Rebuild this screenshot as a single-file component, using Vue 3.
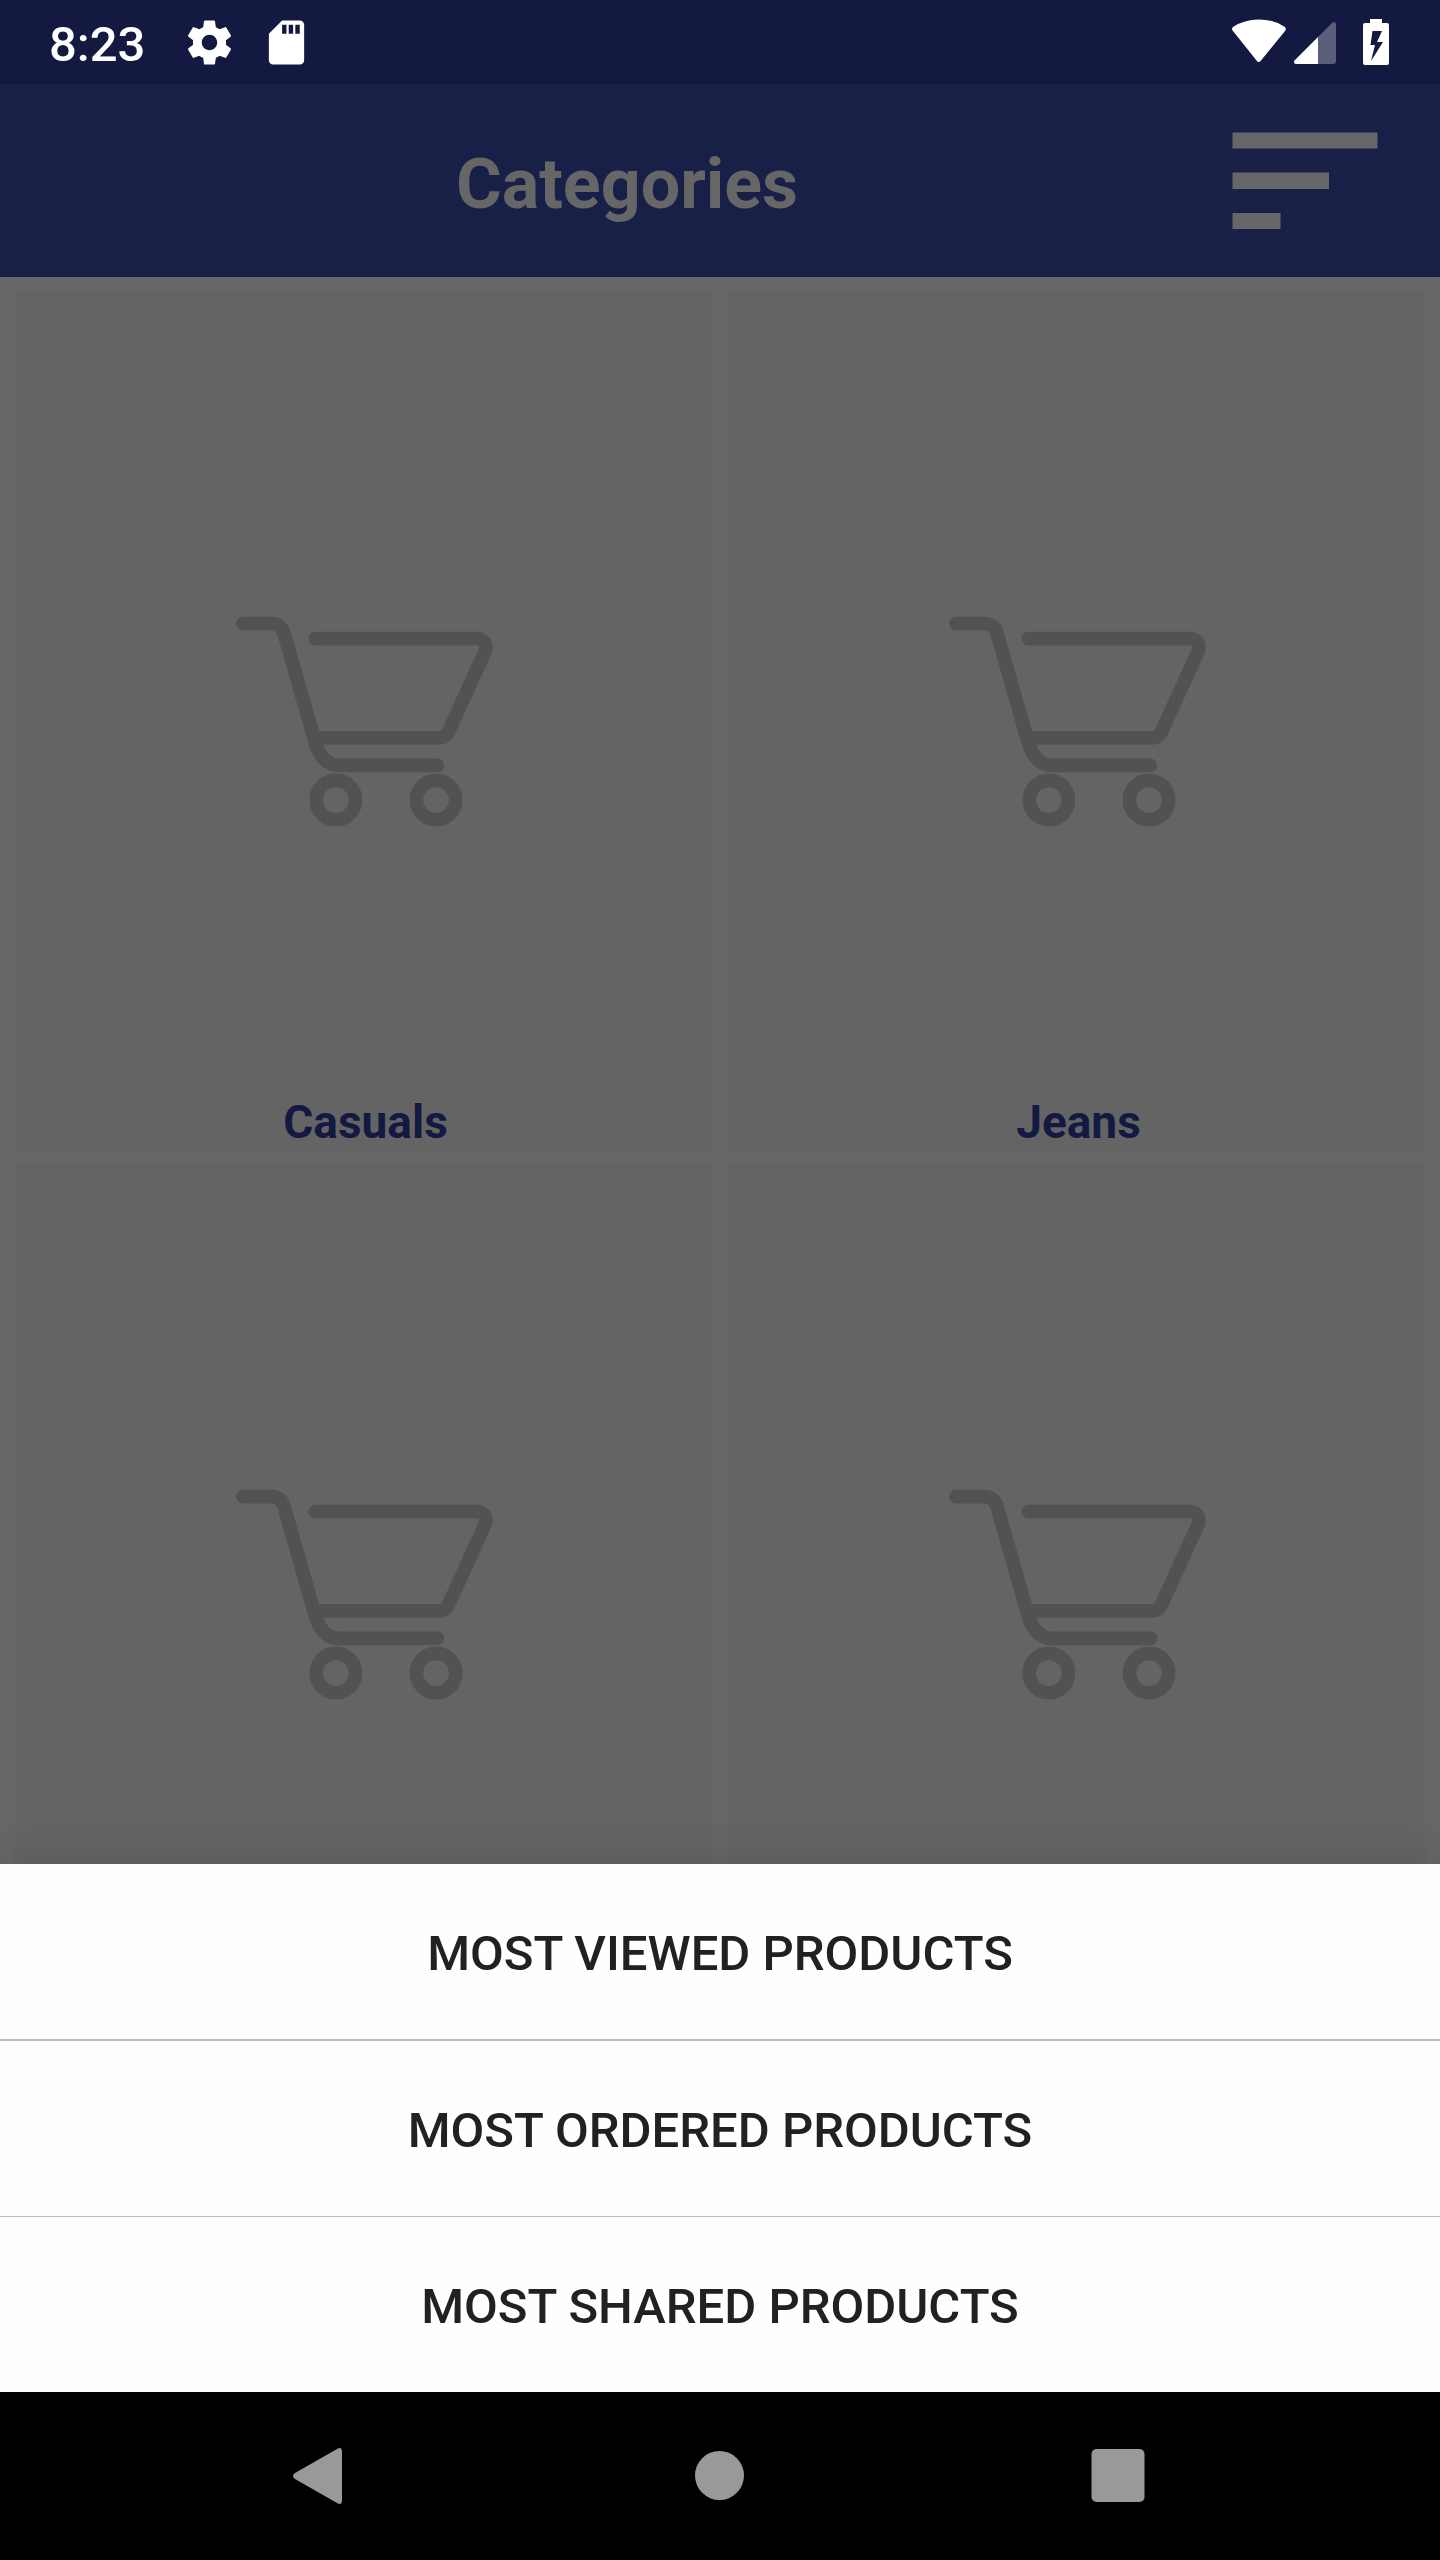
<script setup>
const categories = [
  { id: 1, name: 'Casuals' },
  { id: 2, name: 'Jeans' },
  { id: 3, name: '' },
  { id: 4, name: '' },
]

const actions = ['MOST VIEWED PRODUCTS', 'MOST ORDERED PRODUCTS', 'MOST SHARED PRODUCTS']
</script>

<template>
  <div class="screen">
    <div class="status">
      <time class="clock">8:23</time>
      <svg class="settings" width="53" height="53" viewBox="0 0 24 24" aria-hidden="true">
        <path d="M19.43 12.98c.04-.32.07-.64.07-.98s-.03-.66-.07-.98l2.11-1.65c.19-.15.24-.42.12-.64l-2-3.46c-.12-.22-.39-.3-.61-.22l-2.49 1c-.52-.4-1.08-.73-1.69-.98l-.38-2.65C14.46 2.18 14.25 2 14 2h-4c-.25 0-.46.18-.49.42l-.38 2.65c-.61.25-1.17.59-1.69.98l-2.49-1c-.23-.09-.49 0-.61.22l-2 3.46c-.13.22-.07.49.12.64l2.11 1.65c-.04.32-.07.65-.07.98s.03.66.07.98l-2.11 1.65c-.19.15-.24.42-.12.64l2 3.46c.12.22.39.3.61.22l2.49-1c.52.4 1.08.73 1.69.98l.38 2.65c.03.24.24.42.49.42h4c.25 0 .46-.18.49-.42l.38-2.65c.61-.25 1.17-.59 1.69-.98l2.49 1c.23.09.49 0 .61-.22l2-3.46c.12-.22.07-.49-.12-.64l-2.11-1.65zM12 15.5c-1.93 0-3.5-1.57-3.5-3.5s1.57-3.5 3.5-3.5 3.5 1.57 3.5 3.5-1.57 3.5-3.5 3.5z" />
      </svg>
      <svg class="card-icon" width="53" height="53" viewBox="0 0 24 24" aria-hidden="true">
        <path d="M18 2h-8L4.02 8 4 20c0 1.1.9 2 2 2h12c1.1 0 2-.9 2-2V4c0-1.1-.9-2-2-2zm-6 6h-2V4h2v4zm3 0h-2V4h2v4zm3 0h-2V4h2v4z" />
      </svg>
      <svg class="wifi" width="54" height="52" viewBox="0 0 54 52" aria-hidden="true">
        <path d="M1 15Q-1 13 1 11Q12 3.500 27 3.500T53 11Q54.500 13 53 15L29 44.500Q26.500 47.500 24.500 44.500Z" />
      </svg>
      <svg class="signal" width="42" height="52" viewBox="0 0 42 52" aria-hidden="true">
        <path opacity=".3" d="M24 21L38 7Q41 4.500 42 8V45Q42 48 39 48H24Z" />
        <path d="M24 21V48H2Q-1 47.500 .5 44.500Z" />
      </svg>
      <svg width="26" height="52" viewBox="0 0 26 52" aria-hidden="true">
        <path fill-rule="evenodd" d="M7 3H19V7H24Q26 7 26 9V47Q26 49 24 49H2Q0 49 0 47V9Q0 7 2 7H7ZM9.500 15L7.500 29H12L8 45L20 26H14L19 15Z" />
      </svg>
    </div>

    <header class="bar">
      <h1>Categories</h1>
      <button class="sort" type="button" aria-label="Sort">
        <svg width="146" height="98" viewBox="0 0 146 98" aria-hidden="true">
          <path d="M0.500 0.500H145.500V16.500H0.500ZM0.500 40.500H97V57H0.500ZM0.500 81H48.500V97H0.500Z" />
        </svg>
      </button>
    </header>

    <main class="grid">
      <article v-for="c in categories" :key="c.id" class="card">
        <svg class="cart" width="257" height="211" viewBox="108 108 772 632" aria-hidden="true">
          <path d="M129 130H215Q243 131 252 158L341 470Q361 555 417 556H713" />
          <path d="M346 175H836Q864 181 857 212L746 455Q738 473 720 473H350" />
          <circle cx="408" cy="660" r="59" />
          <circle cx="709" cy="660" r="59" />
        </svg>
        <h2 v-if="c.name">{{ c.name }}</h2>
      </article>
    </main>

    <section class="sheet" aria-label="Sort products">
      <button v-for="a in actions" :key="a" type="button">{{ a }}</button>
    </section>

    <nav class="nav">
      <button type="button" aria-label="Back">
        <svg width="64" height="64" viewBox="0 0 64 64"><path d="M49 5Q54 2 54 8V56Q54 62 49 59L7 35Q3 32 7 29Z" /></svg>
      </button>
      <button type="button" aria-label="Home">
        <svg width="64" height="64" viewBox="0 0 64 64"><circle cx="31.500" cy="31.500" r="24.500" /></svg>
      </button>
      <button type="button" aria-label="Recent apps">
        <svg width="64" height="64" viewBox="0 0 64 64"><rect x="3.500" y="5" width="53" height="53" rx="5" /></svg>
      </button>
    </nav>
  </div>
</template>

<style>
body {
  margin: 0;
}
</style>

<style scoped>
.screen {
  display: flex;
  flex-direction: column;
  height: 100vh;
  overflow: hidden;
  background: #666;
  font-family: Roboto, "Liberation Sans", sans-serif;
}

button {
  border: 0;
  padding: 0;
  background: none;
  font: inherit;
}

svg {
  display: block;
  flex: none;
}

.status {
  display: flex;
  align-items: center;
  flex: none;
  height: 84px;
  padding: 0 51px 0 49px;
  background: #131940;
  color: #fff;
  fill: #fff;
}

.clock {
  font-size: 49px;
  line-height: 56px;
  font-weight: 500;
  padding-top: 6px;
}

.settings {
  margin-left: 38px;
}

.card-icon {
  margin-left: 24px;
}

.wifi {
  margin-left: auto;
}

.signal {
  margin: 0 27px 0 8px;
}

.bar {
  display: flex;
  align-items: center;
  flex: none;
  height: 193px;
  padding: 0 62px 0 22px;
  background: #192048;
}

.bar h1 {
  flex: 1;
  margin: 0;
  padding-top: 6px;
  font-size: 70px;
  line-height: 82px;
  font-weight: 700;
  text-align: center;
  color: #666;
}

.sort {
  fill: #666;
}

.grid {
  flex: 1;
  min-height: 0;
  display: grid;
  grid-template-columns: 1fr 1fr;
  align-content: start;
  gap: 14px;
  padding: 14px;
  box-sizing: border-box;
  overflow: hidden;
}

.card {
  display: grid;
  aspect-ratio: 699 / 859;
  background: #646464;
}

.cart,
.card h2 {
  grid-area: 1 / 1;
}

.cart {
  place-self: center;
  padding: 2px 0 0 2px;
  fill: none;
  stroke: #525252;
  stroke-width: 41;
  stroke-linecap: round;
}

.card h2 {
  place-self: end center;
  margin: 0;
  padding-left: 4px;
  font-size: 46px;
  line-height: 56px;
  font-weight: 700;
  color: #131940;
}

.sheet {
  position: relative;
  display: flex;
  flex-direction: column;
  flex: none;
  background: #fefefe;
  box-shadow: 0 0 40px rgba(0, 0, 0, 0.12);
}

.sheet button {
  box-sizing: content-box;
  height: 171px;
  padding-top: 4px;
  border-bottom: 1px solid #bdbdbd;
  font-size: 49px;
  line-height: 58px;
  font-weight: 500;
  color: #212121;
}

.sheet button:first-child {
  border-bottom-width: 2px;
}

.sheet button:last-child {
  border-bottom: 0;
}

.nav {
  display: flex;
  flex: none;
  justify-content: center;
  height: 168px;
  background: #000;
  fill: #999;
}

.nav button {
  display: grid;
  place-items: center;
  width: 400px;
}
</style>
